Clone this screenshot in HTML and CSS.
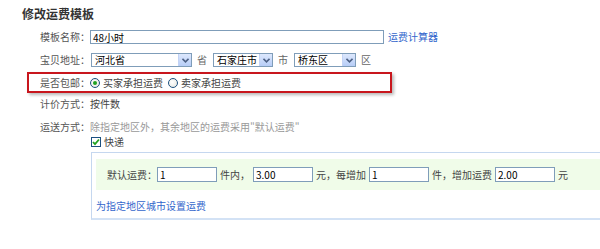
FILE: index.html
```html
<!DOCTYPE html>
<html lang="zh-CN">
<head>
<meta charset="utf-8">
<link rel="stylesheet" href="styles.css">
</head>
<body>
<div class="page">
  <h1 class="title">修改运费模板</h1>
  <div class="form">
    <div class="row row-name">
      <span class="label">模板名称：</span>
      <span class="input input-name">48小时</span>
      <a class="link calc">运费计算器</a>
    </div>
    <div class="row row-addr">
      <span class="label">宝贝地址：</span>
      <span class="select sel-prov"><span class="sel-text">河北省</span><span class="sel-btn"><svg width="7" height="5" viewBox="0 0 7 5"><path d="M0.5 0.8 L3.5 3.8 L6.5 0.8" fill="none" stroke="#4d6185" stroke-width="1.6"/></svg></span></span>
      <span class="unit">省</span>
      <span class="select sel-city"><span class="sel-text">石家庄市</span><span class="sel-btn"><svg width="7" height="5" viewBox="0 0 7 5"><path d="M0.5 0.8 L3.5 3.8 L6.5 0.8" fill="none" stroke="#4d6185" stroke-width="1.6"/></svg></span></span>
      <span class="unit">市</span>
      <span class="select sel-dist"><span class="sel-text">桥东区</span><span class="sel-btn"><svg width="7" height="5" viewBox="0 0 7 5"><path d="M0.5 0.8 L3.5 3.8 L6.5 0.8" fill="none" stroke="#4d6185" stroke-width="1.6"/></svg></span></span>
      <span class="unit">区</span>
    </div>
    <div class="row row-free">
      <span class="label">是否包邮：</span>
      <span class="radio checked"></span><span class="opt">买家承担运费</span>
      <span class="radio"></span><span class="opt">卖家承担运费</span>
    </div>
    <div class="row row-plain">
      <span class="label">计价方式：</span>
      <span class="value">按件数</span>
    </div>
    <div class="row row-plain row-ship">
      <span class="label">运送方式：</span>
      <span class="desc">除指定地区外，其余地区的运费采用"默认运费"</span>
    </div>
    <div class="row row-check">
      <span class="checkbox"><svg width="8" height="8" viewBox="0 0 8 8"><path d="M1 4 L3 6.2 L7 1.5" fill="none" stroke="#21a121" stroke-width="1.8"/></svg></span>
      <span class="value">快递</span>
    </div>
    <div class="ship-box">
      <div class="fee-row">
        <span class="fee-label">默认运费：</span>
        <span class="input fee-input">1</span>
        <span class="fee-text">件内，</span>
        <span class="input fee-input">3.00</span>
        <span class="fee-text">元，每增加</span>
        <span class="input fee-input">1</span>
        <span class="fee-text">件，增加运费</span>
        <span class="input fee-input">2.00</span>
        <span class="fee-text">元</span>
      </div>
      <a class="link area-link">为指定地区城市设置运费</a>
    </div>
  </div>
</div>
</body>
</html>
```
FILE: styles.css
```css
html, body {
  margin: 0;
  padding: 0;
  background: #fff;
  overflow: hidden;
}
body {
  font-family: "Noto Sans CJK SC", "Liberation Sans", sans-serif;
  font-size: 10px;
  color: #444;
  width: 600px;
  height: 249px;
}
.page {
  padding: 8px 0 0 22px;
}
.title {
  margin: 0;
  font-size: 12px;
  line-height: 12px;
  height: 12px;
  font-weight: bold;
  color: #333;
}
.form {
  margin-left: 18px;
}
.row {
  display: flex;
  align-items: center;
  white-space: nowrap;
}
.label {
  width: 50px;
  color: #555;
  line-height: 12px;
}
.input {
  box-sizing: border-box;
  display: inline-flex;
  align-items: center;
  border: 1px solid #7f9db9;
  background: #fff;
  color: #000;
  font-size: 10px;
  padding-left: 2px;
}
.row-name {
  margin-top: 10px;
  height: 14px;
}
.input-name {
  width: 294px;
  height: 14px;
}
.link {
  color: #3366cc;
  text-decoration: none;
  line-height: 12px;
}
.calc {
  margin-left: 4px;
}
.row-addr {
  margin-top: 9px;
  height: 14px;
}
.select {
  box-sizing: border-box;
  display: inline-flex;
  align-items: stretch;
  height: 14px;
  border: 1px solid #7f9db9;
  background: #fff;
  color: #000;
}
.sel-text {
  flex: 1;
  padding-left: 3px;
  line-height: 12px;
  font-size: 10px;
  white-space: nowrap;
}
.sel-btn {
  width: 12px;
  display: flex;
  align-items: center;
  justify-content: center;
  background: linear-gradient(#dde8fd, #b7cdf7);
  border-left: 1px solid #c3d3f5;
}
.sel-prov { width: 101px; margin-left: 1px; }
.sel-city { width: 60px; }
.sel-dist { width: 62px; }
.unit {
  color: #666;
  margin: 0 6px 0 5px;
  line-height: 12px;
}
.row-free {
  box-sizing: border-box;
  margin-top: 5px;
  margin-left: -13px;
  width: 365px;
  height: 21px;
  padding-left: 11px;
  border: 2px solid #c8161d;
  box-shadow: 2px 2px 3px rgba(0, 0, 0, 0.28);
}
.radio {
  box-sizing: border-box;
  width: 10px;
  height: 10px;
  border-radius: 50%;
  border: 1px solid #1c5180;
  background: radial-gradient(circle at 40% 40%, #fff, #e3e3dc);
  margin-right: 3px;
  position: relative;
}
.radio.checked::after {
  content: "";
  position: absolute;
  left: 2px;
  top: 2px;
  width: 4px;
  height: 4px;
  border-radius: 50%;
  background: #21a121;
}
.radio + .opt {
  margin-right: 5px;
}
.opt {
  color: #444;
  line-height: 12px;
}
.row-plain {
  margin-top: 5px;
  height: 12px;
}
.row-ship {
  margin-top: 11px;
}
.value {
  color: #444;
  line-height: 12px;
}
.desc {
  color: #999;
  line-height: 12px;
}
.row-check {
  margin-top: 3px;
  margin-left: 51px;
  height: 12px;
}
.checkbox {
  box-sizing: border-box;
  width: 10px;
  height: 10px;
  border: 1px solid #1c5180;
  background: #fff;
  display: flex;
  align-items: center;
  justify-content: center;
  margin-right: 3px;
}
.ship-box {
  box-sizing: border-box;
  margin-top: 4px;
  margin-left: 51px;
  width: 509px;
  height: 68px;
  border: 1px solid #c5d7ef;
  border-right: none;
  border-bottom: 2px solid #d3e2f5;
  padding: 6px 0 0 4px;
}
.fee-row {
  display: flex;
  align-items: center;
  height: 31px;
  background: #f0fce9;
  padding-left: 11px;
  white-space: nowrap;
}
.fee-label {
  width: 50px;
  color: #444;
  line-height: 12px;
}
.fee-input {
  width: 60px;
  height: 15px;
}
.fee-text {
  color: #444;
  margin: 0 3px 0 3px;
  line-height: 12px;
}
.area-link {
  display: block;
  margin-top: 10px;
}
```
